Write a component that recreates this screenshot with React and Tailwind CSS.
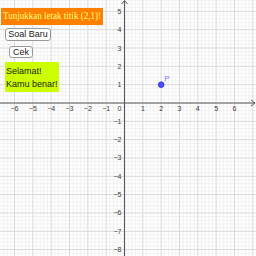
import React from 'react';

const O = { x: 124.5, y: 103 };
const U = 18.33;
const px = (v) => O.x + v * U;
const py = (v) => O.y - v * U;

const range = (a, b, step = 1) => {
  const out = [];
  for (let v = a; v <= b + 1e-9; v += step) out.push(Math.round(v * 100) / 100);
  return out;
};

const Graph = () => {
  const minorX = range(-7, 8, 0.2).filter((v) => Math.abs(v - Math.round(v)) > 0.01);
  const minorY = range(-9, 6, 0.2).filter((v) => Math.abs(v - Math.round(v)) > 0.01);
  const majorX = range(-7, 8);
  const majorY = range(-9, 6);
  const lblX = [-6, -5, -4, -3, -2, -1, 1, 2, 3, 4, 5, 6];
  const lblY = [5, 4, 3, 2, 1, -1, -2, -3, -4, -5, -6, -7, -8];
  const num = (n) => (n < 0 ? `\u2212${-n}` : `${n}`);

  return (
    <svg className="absolute inset-0" width="256" height="256" viewBox="0 0 256 256">
      <rect width="256" height="256" fill="#ffffff" />
      {minorX.map((v) => (
        <line key={`mx${v}`} x1={px(v)} x2={px(v)} y1="0" y2="256" stroke="#f2f2f2" strokeWidth="1" />
      ))}
      {minorY.map((v) => (
        <line key={`my${v}`} x1="0" x2="256" y1={py(v)} y2={py(v)} stroke="#f2f2f2" strokeWidth="1" />
      ))}
      {majorX.map((v) => (
        <line key={`Mx${v}`} x1={px(v)} x2={px(v)} y1="0" y2="256" stroke="#d9d9d9" strokeWidth="1" />
      ))}
      {majorY.map((v) => (
        <line key={`My${v}`} x1="0" x2="256" y1={py(v)} y2={py(v)} stroke="#d9d9d9" strokeWidth="1" />
      ))}
      <line x1="0" x2="255" y1={O.y} y2={O.y} stroke="#5a5a5a" strokeWidth="1.2" />
      <line x1={O.x} x2={O.x} y1="1" y2="256" stroke="#5a5a5a" strokeWidth="1.2" />
      <path d={`M251 ${O.y - 3} L255 ${O.y} L251 ${O.y + 3}`} fill="none" stroke="#5a5a5a" strokeWidth="1" />
      <path d={`M${O.x - 3} 4 L${O.x} 0.5 L${O.x + 3} 4`} fill="none" stroke="#5a5a5a" strokeWidth="1" />
      <g fontFamily="'Liberation Sans', Arial, sans-serif" fontSize="7" fill="#3a3a3a">
        {lblX.map((v) => (
          <text key={`lx${v}`} x={px(v)} y={O.y + 7.5} textAnchor="middle">{num(v)}</text>
        ))}
        {lblY.map((v) => (
          <text key={`ly${v}`} x={O.x - 3} y={py(v) + 2.5} textAnchor="end">{num(v)}</text>
        ))}
        <text x={O.x - 3} y={O.y + 7.5} textAnchor="end">0</text>
      </g>
      <circle cx={px(2)} cy={py(1)} r="2.8" fill="#4d4dff" stroke="#2a2ad0" strokeWidth="0.8" />
      <text x={px(2) + 3} y={py(1) - 4} fontFamily="'Liberation Sans', Arial, sans-serif" fontSize="8" fill="#8080ff">P</text>
    </svg>
  );
};

export default function App() {
  return (
    <div className="relative w-[256px] h-[256px] overflow-hidden bg-white">
      <Graph />
      <div className="relative flex flex-col items-start">
        <div className="mt-[8px] ml-[1px] h-[17px] w-[102px] bg-[#ff8000] flex items-center justify-center font-['Liberation_Serif',serif] text-[10.5px] leading-none text-[#ffff80] whitespace-nowrap">
          <span className="inline-block scale-x-[0.86]">Tunjukkan letak titik (2,1)!</span>
        </div>
        <button className="mt-[3px] ml-[5px] h-[13px] w-[46px] rounded-[3px] border border-[#9a9a9a] bg-white flex items-center justify-center font-['Liberation_Sans',Arial,sans-serif] text-[9px] leading-none text-[#222]">
          Soal Baru
        </button>
        <button className="mt-[5px] ml-[9px] h-[12px] w-[24px] rounded-[3px] border border-[#9a9a9a] bg-white flex items-center justify-center font-['Liberation_Sans',Arial,sans-serif] text-[9px] leading-none text-[#222]">
          Cek
        </button>
        <div className="mt-[4px] ml-[5px] h-[30px] w-[54px] bg-[#ccff00] flex flex-col justify-center gap-[3px] pl-[1px] font-['Liberation_Sans',Arial,sans-serif] text-[9px] leading-[10px] text-[#1a1a1a]">
          <span>Selamat!</span>
          <span>Kamu benar!</span>
        </div>
      </div>
    </div>
  );
}
